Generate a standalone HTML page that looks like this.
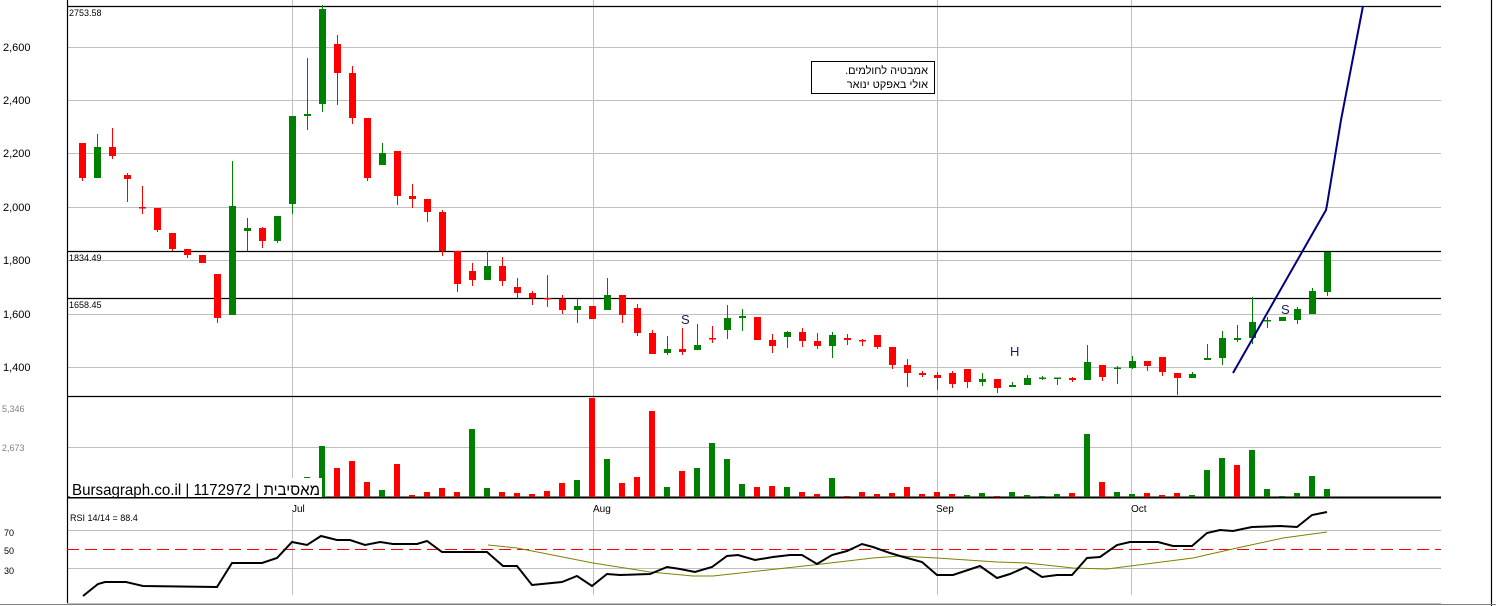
<!DOCTYPE html>
<html><head><meta charset="utf-8"><style>
html,body{margin:0;padding:0;background:#fff;width:1496px;height:606px;overflow:hidden;position:relative}
svg{display:block}
text{font-family:"Liberation Sans","Noto Sans CJK JP",sans-serif}
.note{position:absolute;left:811px;top:61px;width:122px;height:31px;border:1px solid #000;background:#fff;font:11px "Liberation Sans","Noto Sans CJK JP",sans-serif;direction:rtl;text-align:right;padding:0;box-sizing:content-box}
.note div{padding-right:6px;line-height:14px}
</style></head><body>
<svg width="1496" height="606" viewBox="0 0 1496 606" xmlns="http://www.w3.org/2000/svg">
<rect width="1496" height="606" fill="#fff"/>
<g stroke="#c0c0c0" stroke-width="1" fill="none">
<path d="M67 47.5H1441M67 100.5H1441M67 153.5H1441M67 207.5H1441M67 260.5H1441M67 314.5H1441M67 367.5H1441M67 447.5H1441M67 530.5H1441M67 568.5H1441"/>
<path d="M292.5 0V497M593.5 0V497M937.5 0V497M1131.5 0V497M292.5 512V595M593.5 512V595M937.5 512V595M1131.5 512V595"/>
<path d="M67 603.5H1441"/>
</g>
<g stroke="#000" stroke-width="1.2">
<path d="M67 6.5H1441M67 251.5H1441M67 298.5H1441M67 396.5H1441"/>
<path d="M67.5 0V603M1491.5 0V606"/>
</g>
<path d="M67 497.5H1441" stroke="#000" stroke-width="2"/>
<path d="M67 549.5H1441" stroke="#ff0000" stroke-width="1" stroke-dasharray="12,6"/>
<path d="M0 604.5H1496" stroke="#808080" stroke-width="1"/>

<g font-size="11" fill="#000">
<text x="3" y="51">2,600</text><text x="3" y="104">2,400</text><text x="3" y="157">2,200</text>
<text x="3" y="211">2,000</text><text x="3" y="264">1,800</text><text x="3" y="318">1,600</text>
<text x="3" y="371">1,400</text>
</g>
<g font-size="9" fill="#000">
<text x="69" y="16">2753.58</text><text x="69" y="261">1834.49</text><text x="69" y="308">1658.45</text>
<text x="70" y="521">RSI 14/14 = 88.4</text>
<text x="4" y="536">70</text><text x="4" y="554">50</text><text x="4" y="574">30</text>
</g>
<g font-size="9" fill="#808080"><text x="2" y="412">5,346</text><text x="2" y="451">2,673</text></g>
<g font-size="10" fill="#000">
<text x="292" y="512">Jul</text><text x="593" y="512">Aug</text><text x="936" y="512">Sep</text><text x="1131" y="512">Oct</text>
</g>

<g stroke="#ff0000" fill="#ff0000" stroke-width="1">
<path d="M82.5 143V181M112.5 128V159M127.5 173V202M142.5 186V214M157.5 208V232M172.5 233V251M187.5 249V258M202.5 255V263M217.5 274V323M262.5 227V248M337.5 35V105M352.5 66V124M367.5 118V181M397.5 151V205M412.5 184V208M427.5 199V222M442.5 210V256M457.5 251V292M472.5 263V286M502.5 257V286M517.5 278V298M532.5 291V305M547.5 275V307M562.5 295V314M592.5 306V319M622.5 295V323M637.5 304V336M652.5 330V354M682.5 328V355M712.5 326V343M757.5 317V340M772.5 334V353M802.5 328V347M817.5 333V349M847.5 334V345M862.5 339V346M877.5 335V349M892.5 347V369M907.5 359V387M922.5 371V377M937.5 372V390M952.5 371V388M967.5 369V388M997.5 379V393M1072.5 377V382M1102.5 365V381M1147.5 361V371M1162.5 357V376M1177.5 373V395"/>
</g>
<g fill="#ff0000">
<rect x="79" y="143" width="7" height="35"/><rect x="109" y="147" width="7" height="9"/><rect x="124" y="175" width="7" height="4"/>
<rect x="139" y="207" width="7" height="1.5"/><rect x="154" y="208" width="7" height="22"/><rect x="169" y="233" width="7" height="16"/>
<rect x="184" y="249" width="7" height="6"/><rect x="199" y="255" width="7" height="8"/><rect x="214" y="274" width="7" height="44"/>
<rect x="259" y="228" width="7" height="13"/><rect x="334" y="44" width="7" height="29"/><rect x="349" y="73" width="7" height="45"/>
<rect x="364" y="118" width="7" height="60"/><rect x="394" y="151" width="7" height="45"/><rect x="409" y="196" width="7" height="3"/>
<rect x="424" y="199" width="7" height="13"/><rect x="439" y="212" width="7" height="39"/><rect x="454" y="251" width="7" height="33"/>
<rect x="469" y="271" width="7" height="9"/><rect x="499" y="266" width="7" height="15"/><rect x="514" y="287" width="7" height="6"/>
<rect x="529" y="293" width="7" height="5"/><rect x="544" y="298" width="7" height="1.5"/><rect x="559" y="299" width="7" height="11"/>
<rect x="589" y="306" width="7" height="13"/><rect x="619" y="295" width="7" height="20"/><rect x="634" y="308" width="7" height="25"/>
<rect x="649" y="333" width="7" height="21"/><rect x="679" y="349" width="7" height="3"/><rect x="709" y="338" width="7" height="1.5"/>
<rect x="754" y="317" width="7" height="23"/><rect x="769" y="340" width="7" height="6"/><rect x="799" y="332" width="7" height="9"/>
<rect x="814" y="341" width="7" height="5"/><rect x="844" y="338" width="7" height="2"/><rect x="859" y="340" width="7" height="1.5"/>
<rect x="874" y="335" width="7" height="12"/><rect x="889" y="347" width="7" height="18"/><rect x="904" y="365" width="7" height="8"/>
<rect x="919" y="373" width="7" height="2"/><rect x="934" y="375" width="7" height="3"/><rect x="949" y="373" width="7" height="11"/>
<rect x="964" y="369" width="7" height="13"/><rect x="994" y="379" width="7" height="9"/><rect x="1069" y="378" width="7" height="2"/>
<rect x="1099" y="365" width="7" height="12"/><rect x="1144" y="361" width="7" height="5"/><rect x="1159" y="357" width="7" height="15"/>
<rect x="1174" y="373" width="7" height="5"/>
</g>
<g stroke="#008000" stroke-width="1">
<path d="M97.5 134V178M232.5 161V315M247.5 218V251M277.5 216V243M292.5 116V214M307.5 58V130M322.5 5V112M382.5 143V165M487.5 251V280M577.5 299V323M607.5 278V310M667.5 336V355M697.5 324V350M727.5 305V339M742.5 309V331M787.5 331V348M832.5 332V358M982.5 373V386M1012.5 382V387M1027.5 375V385M1042.5 376V380M1057.5 378V385M1087.5 345V380M1117.5 366V384M1132.5 356V369M1192.5 372V378M1207.5 344V360M1222.5 331V365M1237.5 325V342M1252.5 297V344M1267.5 317V328M1282.5 317V321M1297.5 307V324M1312.5 288V314M1327.5 252V296"/>
</g>
<g fill="#008000">
<rect x="94" y="147" width="7" height="31"/><rect x="229" y="206" width="7" height="109"/><rect x="244" y="228" width="7" height="3"/>
<rect x="274" y="216" width="7" height="25"/><rect x="289" y="116" width="7" height="88"/><rect x="304" y="114" width="7" height="2"/>
<rect x="319" y="9" width="7" height="95"/><rect x="379" y="153" width="7" height="12"/><rect x="484" y="266" width="7" height="14"/>
<rect x="574" y="306" width="7" height="4"/><rect x="604" y="295" width="7" height="15"/><rect x="664" y="349" width="7" height="4"/>
<rect x="694" y="345" width="7" height="5"/><rect x="724" y="318" width="7" height="12"/><rect x="739" y="316" width="7" height="2"/>
<rect x="784" y="332" width="7" height="5"/><rect x="829" y="335" width="7" height="11"/><rect x="979" y="379" width="7" height="3"/>
<rect x="1009" y="385" width="7" height="2"/><rect x="1024" y="378" width="7" height="7"/><rect x="1039" y="377.5" width="7" height="1.5"/>
<rect x="1054" y="377.5" width="7" height="1.5"/><rect x="1084" y="362" width="7" height="18"/><rect x="1114" y="367.5" width="7" height="1.5"/>
<rect x="1129" y="361" width="7" height="7"/><rect x="1189" y="374" width="7" height="4"/><rect x="1204" y="358" width="7" height="2"/>
<rect x="1219" y="338" width="7" height="20"/><rect x="1234" y="338" width="7" height="2"/><rect x="1249" y="322" width="7" height="16"/>
<rect x="1264" y="320" width="7" height="1.5"/><rect x="1279" y="317" width="7" height="4"/><rect x="1294" y="309" width="7" height="11"/>
<rect x="1309" y="291" width="7" height="23"/><rect x="1324" y="252" width="7" height="40"/>
</g>

<polyline points="1233,373 1326,210 1327,205 1341,120 1363,6" fill="none" stroke="#000080" stroke-width="2"/>

<g font-size="13" fill="#1a1a5a">
<text x="681" y="324">S</text><text x="1010" y="356">H</text><text x="1281" y="314">S</text>
</g>

<g fill="#ff0000">
<rect x="334" y="468" width="6" height="29"/><rect x="349" y="461" width="6" height="36"/><rect x="364" y="482" width="6" height="15"/>
<rect x="394" y="464" width="6" height="33"/><rect x="409" y="495" width="6" height="2"/><rect x="424" y="492" width="6" height="5"/>
<rect x="439" y="488" width="6" height="9"/><rect x="454" y="492" width="6" height="5"/><rect x="499" y="492" width="6" height="5"/>
<rect x="514" y="493" width="6" height="4"/><rect x="529" y="494" width="6" height="3"/><rect x="544" y="491" width="6" height="6"/>
<rect x="559" y="483" width="6" height="14"/><rect x="589" y="398" width="6" height="99"/><rect x="619" y="483" width="6" height="14"/>
<rect x="634" y="477" width="6" height="20"/><rect x="649" y="411" width="6" height="86"/><rect x="679" y="471" width="6" height="26"/>
<rect x="754" y="487" width="6" height="10"/><rect x="769" y="486" width="6" height="11"/><rect x="799" y="492" width="6" height="5"/>
<rect x="814" y="494" width="6" height="3"/><rect x="844" y="496" width="6" height="1"/><rect x="859" y="492" width="6" height="5"/>
<rect x="874" y="494" width="6" height="3"/><rect x="889" y="493" width="6" height="4"/><rect x="904" y="487" width="6" height="10"/>
<rect x="919" y="494" width="6" height="3"/><rect x="934" y="492" width="6" height="5"/><rect x="949" y="494" width="6" height="3"/>
<rect x="994" y="496" width="6" height="1"/><rect x="1069" y="493" width="6" height="4"/><rect x="1099" y="482" width="6" height="15"/>
<rect x="1144" y="493" width="6" height="4"/><rect x="1159" y="495" width="6" height="2"/><rect x="1174" y="493" width="6" height="4"/>
<rect x="1234" y="465" width="6" height="32"/>
</g>
<g fill="#008000">
<rect x="304" y="477" width="6" height="20"/><rect x="319" y="446" width="6" height="51"/><rect x="379" y="490" width="6" height="7"/>
<rect x="469" y="429" width="6" height="68"/><rect x="484" y="488" width="6" height="9"/><rect x="574" y="480" width="6" height="17"/>
<rect x="604" y="459" width="6" height="38"/><rect x="664" y="487" width="6" height="10"/><rect x="694" y="468" width="6" height="29"/>
<rect x="709" y="443" width="6" height="54"/><rect x="724" y="459" width="6" height="38"/><rect x="739" y="484" width="6" height="13"/>
<rect x="784" y="487" width="6" height="10"/><rect x="829" y="478" width="6" height="19"/><rect x="964" y="495" width="6" height="2"/>
<rect x="979" y="493" width="6" height="4"/><rect x="1009" y="492" width="6" height="5"/><rect x="1024" y="495" width="6" height="2"/>
<rect x="1039" y="496" width="6" height="1"/><rect x="1054" y="494" width="6" height="3"/><rect x="1084" y="434" width="6" height="63"/>
<rect x="1114" y="492" width="6" height="5"/><rect x="1129" y="494" width="6" height="3"/><rect x="1189" y="495" width="6" height="2"/>
<rect x="1204" y="470" width="6" height="27"/><rect x="1219" y="458" width="6" height="39"/><rect x="1249" y="450" width="6" height="47"/>
<rect x="1264" y="489" width="6" height="8"/><rect x="1279" y="496" width="6" height="1"/><rect x="1294" y="493" width="6" height="4"/>
<rect x="1309" y="476" width="6" height="21"/><rect x="1324" y="489" width="6" height="8"/>
</g>
<rect x="70" y="478" width="252" height="19" fill="#fff"/>
<text x="72" y="495" font-size="16" fill="#000" textLength="248" lengthAdjust="spacingAndGlyphs">Bursagraph.co.il | 1172972 | מאסיבית</text>

<polyline fill="none" stroke="#808000" stroke-width="1" points="488,545 517,548 593,563 650,572 693,576 713,576 813,565 873,558 900,556 937,558 997,562 1027,563 1073,568 1107,569 1193,558 1237,548 1283,538 1327,532"/>
<polyline fill="none" stroke="#000" stroke-width="2" points="83,596 98,584 105,582 126,582 143,586 217,587 232,563 262,563 277,558 292,542 307,545 321,536 337,540 350,540 365,545 380,542 393,544 417,544 427,541 442,552 487,552 503,566 517,566 532,585 562,582 577,576 592,586 607,574 620,575 650,574 667,567 680,569 695,572 712,567 727,556 738,555 755,560 773,557 790,555 802,555 817,564 832,555 847,551 862,544 873,547 890,553 900,556 922,562 937,575 953,575 980,566 997,578 1010,574 1026,567 1042,577 1057,575 1072,575 1087,558 1100,557 1117,545 1130,542 1158,542 1173,546 1192,546 1207,533 1220,530 1233,531 1252,527 1280,526 1297,527 1312,515 1327,512"/>
</svg>
<div class="note"><div style="margin-top:2px">אמבטיה לחולמים.</div><div>אולי באפקט ינואר</div></div>
</body></html>
